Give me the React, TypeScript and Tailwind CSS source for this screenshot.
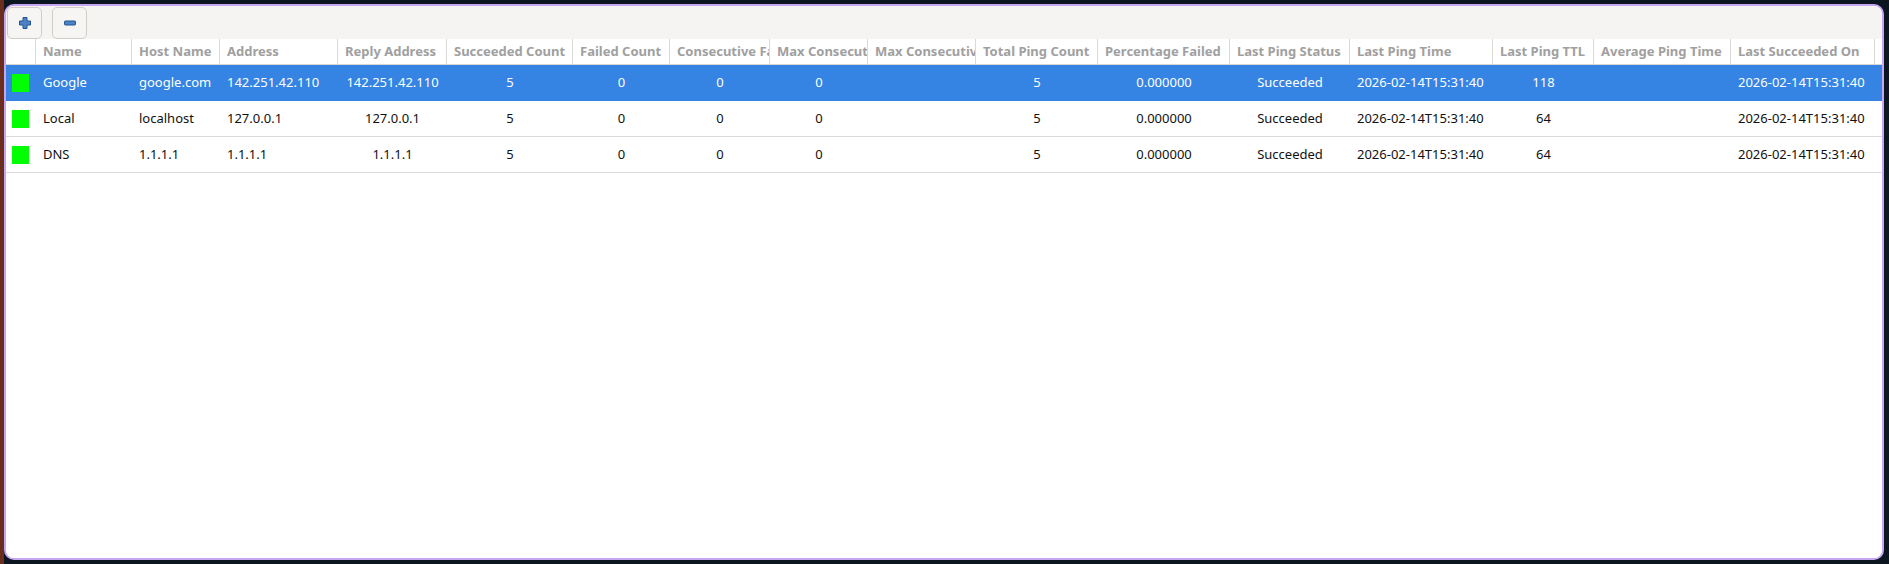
import React from "react";

const columns = [
  { title: "", align: "left" },
  { title: "Name", align: "left" },
  { title: "Host Name", align: "left" },
  { title: "Address", align: "left" },
  { title: "Reply Address", align: "center" },
  { title: "Succeeded Count", align: "center" },
  { title: "Failed Count", align: "center" },
  { title: "Consecutive Failed Count", align: "center" },
  { title: "Max Consecutive Failed Count", align: "center" },
  { title: "Max Consecutive Failed Time", align: "center" },
  { title: "Total Ping Count", align: "center" },
  { title: "Percentage Failed", align: "center" },
  { title: "Last Ping Status", align: "center" },
  { title: "Last Ping Time", align: "left" },
  { title: "Last Ping TTL", align: "center" },
  { title: "Average Ping Time", align: "center" },
  { title: "Last Succeeded On", align: "left" },
];

const rows = [
  ["Google", "google.com", "142.251.42.110", "142.251.42.110", "5", "0", "0", "0", "", "5", "0.000000", "Succeeded", "2026-02-14T15:31:40", "118", "", "2026-02-14T15:31:40"],
  ["Local", "localhost", "127.0.0.1", "127.0.0.1", "5", "0", "0", "0", "", "5", "0.000000", "Succeeded", "2026-02-14T15:31:40", "64", "", "2026-02-14T15:31:40"],
  ["DNS", "1.1.1.1", "1.1.1.1", "1.1.1.1", "5", "0", "0", "0", "", "5", "0.000000", "Succeeded", "2026-02-14T15:31:40", "64", "", "2026-02-14T15:31:40"],
];

const grid =
  "grid grid-cols-[30px_96px_88px_118px_109px_126px_97px_100px_98px_108px_122px_132px_120px_143px_101px_137px_144px_1fr]";

function PlusIcon() {
  return (
    <svg width="14" height="14" viewBox="0 0 14 14">
      <path
        d="M5 1.5h4v3.5h3.5v4H9v3.5H5V9H1.5V5H5z"
        fill="#4c83c8"
        stroke="#24538f"
        strokeWidth="1"
        strokeLinejoin="round"
      />
    </svg>
  );
}

function MinusIcon() {
  return (
    <svg width="14" height="14" viewBox="0 0 14 14">
      <rect x="1.5" y="5" width="11" height="4" rx="0.8" fill="#4c83c8" stroke="#24538f" strokeWidth="1" />
    </svg>
  );
}

export default function App() {
  return (
    <div className="h-[564px] w-[1889px] bg-[#0b1621] flex font-['Noto_Sans',sans-serif]">
      <div className="w-[4px] h-full bg-[#6b2e1c]" />
      <div className="flex-1 flex flex-col pt-[4px] pb-[4px] pr-[5px]">
        <div className="flex-1 flex flex-col border-2 border-[#c6a6f3] rounded-[10px] overflow-hidden bg-white">
          {/* toolbar */}
          <div className="h-[33px] bg-[#f5f4f2] flex items-start gap-[10px] pl-[1px] pt-[1px]">
            <button className="w-[35px] h-[32px] rounded-[5px] border border-[#d2ccc6] bg-[#f6f5f4] flex items-center justify-center">
              <PlusIcon />
            </button>
            <button className="w-[35px] h-[32px] rounded-[5px] border border-[#d2ccc6] bg-[#f6f5f4] flex items-center justify-center">
              <MinusIcon />
            </button>
          </div>

          {/* header */}
          <div className={`${grid} h-[26px] border-b border-[#d9d5d1] bg-white`}>
            {columns.map((c, i) => (
              <div
                key={i}
                className="border-r border-[#dcd8d4] px-[7px] overflow-hidden whitespace-nowrap text-[13px] font-bold text-[#a0a0a0] leading-[25px]"
              >
                {c.title}
              </div>
            ))}
            <div />
          </div>

          {/* rows */}
          {rows.map((r, ri) => {
            const selected = ri === 0;
            return (
              <div
                key={ri}
                className={`${grid} h-[36px] border-b ${
                  selected ? "bg-[#3584e4] border-[#3584e4] text-white" : "bg-white border-[#dadada] text-[#111111]"
                }`}
              >
                <div className="flex items-center pl-[6px]">
                  <div className="w-[17px] h-[18px] bg-[#00ff00]" />
                </div>
                {r.map((v, ci) => (
                  <div
                    key={ci}
                    className={`px-[7px] overflow-hidden whitespace-nowrap text-[13px] leading-[35px] ${
                      columns[ci + 1].align === "center" ? "text-center" : "text-left"
                    }`}
                  >
                    {v}
                  </div>
                ))}
                <div />
              </div>
            );
          })}
          <div className="flex-1 bg-white" />
        </div>
      </div>
    </div>
  );
}
